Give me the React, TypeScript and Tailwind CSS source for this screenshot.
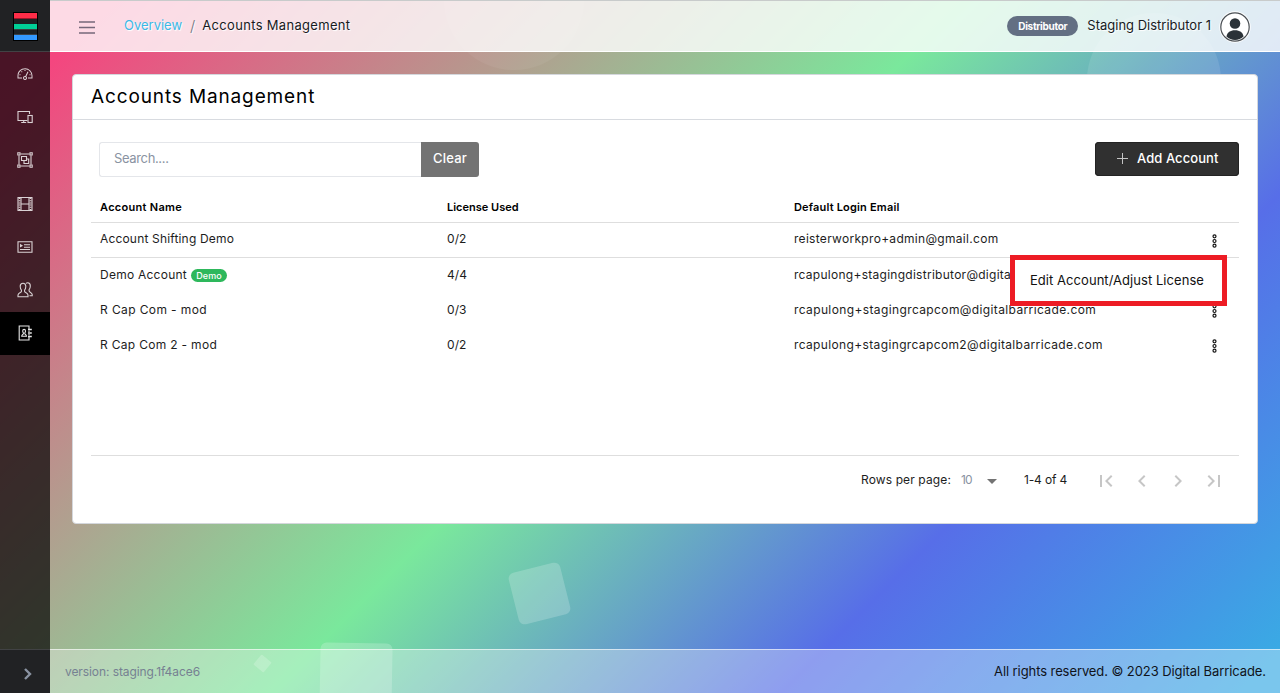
import type { ReactNode } from 'react';

function Icon({ children }: { children: ReactNode }) {
  return (
    <svg viewBox="0 0 16 16" className="h-4 w-4" fill="none" stroke="currentColor" strokeWidth="1.1">
      {children}
    </svg>
  );
}

const menu: { name: string; active?: boolean; icon: ReactNode }[] = [
  {
    name: 'dashboard',
    icon: (
      <svg viewBox="0 0 512 512" className="h-4 w-4" fill="currentColor">
        <path d="M425.706,142.294A240,240,0,0,0,16,312v88H160V368H48V312c0-114.691,93.309-208,208-208s208,93.309,208,208v56H352v32H496V312A238.432,238.432,0,0,0,425.706,142.294Z" />
        <path d="M80 264h32v32H80zM240 128h32v32h-32zM136 168h32v32h-32zM400 264h32v32h-32z" />
        <path d="M297.222,335.1l69.2-144.173-28.85-13.848L268.389,321.214A64.141,64.141,0,1,0,297.222,335.1ZM256,416a32,32,0,1,1,32-32A32.036,32.036,0,0,1,256,416Z" />
      </svg>
    ),
  },
  {
    name: 'devices',
    icon: (
      <Icon>
        <path d="M12.5 5V2.5H1v9h9.3M4.2 13.5h5M6.7 11.5v2" />
        <rect x="11" y="6.5" width="4.2" height="7" />
      </Icon>
    ),
  },
  {
    name: 'groups',
    icon: (
      <Icon>
        <path d="M2 3.5v9M14 3.5v9M3.5 2h9M3.5 14h9" />
        <path d="M.8.8h2.2v2.2H.8zM13 .8h2.2v2.2H13zM.8 13h2.2v2.2H.8zM13 13h2.2v2.2H13z" />
        <path d="M4.5 4.5h5v4h-5zM9.5 7h2.2v4.5H7V8.5" />
      </Icon>
    ),
  },
  {
    name: 'films',
    icon: (
      <Icon>
        <path d="M1 1.5h14v13H1zM4 1.5v13M12 1.5v13M4 8h8" />
        <path d="M2.5 2v12M13.5 2v12" strokeDasharray="1 1.2" strokeWidth="1.6" />
      </Icon>
    ),
  },
  {
    name: 'playlists',
    icon: (
      <Icon>
        <path d="M1 2.8h14v10.5H1z" />
        <path d="M7 5.8h6M7 8.2h6M3 10.5h10" />
        <path d="M3 4.8v3.8L6 6.7z" fill="currentColor" stroke="none" />
      </Icon>
    ),
  },
  {
    name: 'users',
    icon: (
      <Icon>
        <path d="M6 1.2C4.200 1.200 3.200 2.500 3.200 4.300c0 1.700.4 2.800 1.200 3.700v1.500C4.400 10.300 1 11 1 13v1.800h10V13c0-2-3.400-2.700-3.400-3.500V8c.8-.9 1.200-2 1.200-3.700C8.800 2.500 7.800 1.200 6 1.200z" />
        <path d="M9 1.500C9.500.9 10 .8 10.700.8c1.700 0 2.600 1.300 2.600 3.100 0 1.700-.4 2.800-1.200 3.700v1.500c0 .9 3.100 1.500 3.100 3.400v1.300h-2.700" />
      </Icon>
    ),
  },
  {
    name: 'accounts',
    active: true,
    icon: (
      <Icon>
        <path d="M12 4V1H2.200v14H12v-3M12 5.500v1.500M12 9v1.500" />
        <path d="M11 4.500h3.800M11 8h3.800M11 11.500h3.800" strokeWidth="1.500" />
        <path d="M7.100 4.400c-.9 0-1.400.7-1.400 1.600s.3 1.500.7 1.900v.8c0 .5-1.700.7-1.700 2.600h4.800c0-1.900-1.700-2.100-1.700-2.600v-.8c.4-.4.7-1 .7-1.900s-.5-1.600-1.400-1.600z" />
      </Icon>
    ),
  },
];

function Sidebar() {
  return (
    <aside className="flex h-full w-[50px] shrink-0 flex-col bg-black/70">
      <div className="flex h-[52px] shrink-0 items-center justify-center border-b border-[#414244] bg-[#212224]">
        <svg viewBox="0 0 25 29" className="mt-px h-[29px] w-[25px]">
          <rect width="25" height="29" fill="#000" />
          <rect x="1" y="1" width="23" height="27" fill="#1d2123" />
          <rect x="1" y="1" width="23" height="5" fill="#ff2d48" />
          <rect x="1" y="6" width="23" height="1" fill="#a0162a" />
          <rect x="1" y="12" width="23" height="5" fill="#00cf96" />
          <rect x="1" y="17" width="23" height="1" fill="#3a3f41" />
          <rect x="1" y="22" width="23" height="1" fill="#3a4148" />
          <rect x="1" y="23" width="23" height="5" fill="#3399ff" />
        </svg>
      </div>
      <nav className="flex grow flex-col pt-[0.8px]">
        {menu.map((m) => (
          <div
            key={m.name}
            className={
              m.active
                ? 'flex h-[43.2px] items-center justify-center bg-black pb-[1.2px] text-white/90'
                : 'flex h-[43.2px] items-center justify-center pb-[0.7px] text-white/80'
            }
          >
            {m.icon}
          </div>
        ))}
      </nav>
      <div className="flex h-11 shrink-0 items-center justify-center border-t border-[#414244] bg-[#212224] pt-1 pl-[5px]">
        <svg viewBox="0 0 8 12" className="h-3 w-2" fill="none" stroke="#8a93a2" strokeWidth="2.400">
          <path d="M1 1l5 5-5 5" />
        </svg>
      </div>
    </aside>
  );
}

function Topbar() {
  return (
    <header className="flex h-[52px] shrink-0 items-center border-t border-b border-t-[#c8cbcb] border-b-white bg-white/80 pr-[29px] pl-[29px] text-[13px] text-[#181b1e] [text-shadow:1px_1px_1px_#fff]">
      <svg viewBox="0 0 16 13" className="mt-[2px] h-[13px] w-4 shrink-0" stroke="#75687a" strokeWidth="1.300">
        <path d="M0 1h16M0 6.500h16M0 12h16" />
      </svg>
      <span className="ml-[29px] text-[#3cb9e6]">Overview</span>
      <span className="ml-2 text-[15px] font-light text-[#6c7580]">/</span>
      <span className="ml-[7px] tracking-[0.31px]">Accounts Management</span>
      <span className="mr-[9px] ml-auto flex h-5 w-[71px] items-center justify-center rounded-full bg-[#636f83] text-[10px] font-bold tracking-[-0.3px] text-white [text-shadow:none]">
        Distributor
      </span>
      <span>Staging Distributor 1</span>
      <svg viewBox="0 0 32 32" className="mt-px ml-2 h-8 w-8">
        <circle cx="16" cy="16" r="15.700" fill="#fff" />
        <circle cx="16" cy="16" r="14.200" fill="#fff" stroke="#4a4f54" strokeWidth="1.200" />
        <circle cx="16" cy="12.500" r="5.300" fill="#2b3238" />
        <path d="M7.500 25.500c.6-4 3.700-6.200 8.500-6.200s7.900 2.200 8.500 6.200c-2.300 2.300-5.200 3.500-8.500 3.500s-6.200-1.200-8.500-3.500z" fill="#2b3238" />
      </svg>
    </header>
  );
}

function Kebab() {
  return (
    <svg viewBox="0 0 5 14" className="mt-[3px] h-[14px] w-[5px]" fill="none" stroke="#111" strokeWidth="1.200">
      <circle cx="2.500" cy="2.300" r="1.500" />
      <circle cx="2.500" cy="7" r="1.500" />
      <circle cx="2.500" cy="11.700" r="1.500" />
    </svg>
  );
}

const rows = [
  {
    name: 'Account Shifting Demo',
    nameClass: 'tracking-[0.17px]',
    used: '0/2',
    email: 'reisterworkpro+admin@gmail.com',
    emailClass: 'tracking-[0.3px]',
    line: true,
  },
  {
    name: 'Demo Account',
    nameClass: 'tracking-[0.25px]',
    used: '4/4',
    email: 'rcapulong+stagingdistributor@digita',
    emailClass: 'tracking-[0.27px]',
    demo: true,
  },
  {
    name: 'R Cap Com - mod',
    nameClass: 'tracking-[0.39px]',
    used: '0/3',
    email: 'rcapulong+stagingrcapcom@digitalbarricade.com',
    emailClass: 'tracking-[0.38px]',
  },
  {
    name: 'R Cap Com 2 - mod',
    nameClass: 'tracking-[0.31px]',
    used: '0/2',
    email: 'rcapulong+stagingrcapcom2@digitalbarricade.com',
    emailClass: 'tracking-[0.36px]',
  },
];

function Table() {
  return (
    <div className="flex h-[264px] flex-col border-b border-[#dedede] text-[12px] text-[#1d1d1d]">
      <div className="flex h-[31px] items-center border-b border-[#dedede] pl-[9px] text-[11px] font-semibold text-black">
        <span className="w-[347px] tracking-[0.29px]">Account Name</span>
        <span className="w-[347px]">License Used</span>
        <span className="tracking-[0.18px]">Default Login Email</span>
      </div>
      {rows.map((r) => (
        <div
          key={r.name}
          className={
            r.line
              ? 'flex h-[35px] items-center border-b border-[#dedede] pb-[2px] pl-[9px]'
              : 'flex h-[35px] items-center pb-[2px] pl-[9px]'
          }
        >
          <span className="flex w-[347px] items-center gap-1">
            <span className={r.nameClass}>{r.name}</span>
            {r.demo && (
              <span className="mt-[2px] flex h-[13px] w-9 items-center justify-center rounded-full bg-[#2eb85c] text-[9px] font-medium tracking-[0.15px] text-white">
                Demo
              </span>
            )}
          </span>
          <span className="w-[347px] tracking-[0.08px]">{r.used}</span>
          <span className="w-[418px]">
            <span className={r.emailClass}>{r.email}</span>
          </span>
          <Kebab />
        </div>
      ))}
    </div>
  );
}

function Pagination() {
  return (
    <div className="flex h-12 items-center pr-[13px] text-[12px] text-[#1d1d1d]">
      <span className="ml-auto tracking-[0.12px]">Rows per page:</span>
      <span className="ml-[10px] w-[26px] tracking-[-0.8px] text-[#8a93a2]">10</span>
      <svg viewBox="0 0 10 5" className="mt-[3px] h-[5px] w-[10px]" fill="#737373">
        <path d="M0 0h10L5 5z" />
      </svg>
      <span className="ml-[27px] w-[70px] tracking-[-0.16px]">1-4 of 4</span>
      <div className="mt-[2px] flex gap-3 text-[#c6c6c6]">
        {[
          'M18.410 16.590L13.820 12l4.590-4.590L17 6l-6 6 6 6zM6 6h2v12H6z',
          'M15.410 7.410L14 6l-6 6 6 6 1.410-1.410L10.830 12z',
          'M10 6L8.590 7.410 13.170 12l-4.580 4.590L10 18l6-6z',
          'M5.590 7.410L10.180 12l-4.590 4.590L7 18l6-6-6-6zM16 6h2v12h-2z',
        ].map((d) => (
          <svg key={d} viewBox="0 0 24 24" className="h-6 w-6" fill="currentColor">
            <path d={d} />
          </svg>
        ))}
      </div>
    </div>
  );
}

export default function App() {
  return (
    <div className="relative flex h-[693px] w-[1280px] overflow-hidden bg-[linear-gradient(135deg,#f8437f_0px,#f4467f_80px,#7ae89c_682px,#576ee8_1042px,#3aaae4_1366px)] font-['Inter',sans-serif]">
      <div className="absolute top-[-70px] left-[444px] size-[140px] rounded-full bg-white/5" />
      <div className="absolute top-[13px] left-[1087px] size-[134px] rounded-full bg-white/10" />
      <div className="absolute top-[567px] left-[513px] size-[53px] rotate-[-14deg] rounded-md bg-white/20" />
      <div className="absolute top-[643px] left-[320px] size-[72px] rotate-1 rounded-md bg-white/20" />
      <div className="absolute top-[657px] left-[256px] size-[13px] rotate-[40deg] rounded-[1px] bg-white/20" />

      <div className="relative flex h-full w-full">
        <Sidebar />
        <div className="flex min-w-0 grow flex-col">
          <Topbar />
          <main className="grow px-[22px] pt-[22px]">
            <section className="h-[450px] w-[1186px] rounded border border-[#d4d7dc] bg-white px-[18px]">
              <h1 className="-mx-[18px] flex h-[45px] items-center border-b border-[#d8dbe0] pl-[18px] text-[19px] tracking-[0.87px] text-black">
                Accounts Management
              </h1>
              <div className="flex h-[72px] pt-[22px] pl-2">
                <div className="flex h-[35px] w-[322px] items-center rounded-l-[3px] border border-r-0 border-[#e4e6ea] pb-[2px] pl-[14px] text-[13px] tracking-[-0.36px] text-[#8a93a2]">
                  Search....
                </div>
                <button className="h-[35px] w-[58px] rounded-r-[3px] bg-[#737373] pb-[2px] text-[13px] font-medium tracking-[0.2px] text-white">
                  Clear
                </button>
                <button className="ml-auto flex h-[34px] w-36 items-center rounded bg-[#303030] pl-[22px] text-[13px] font-medium tracking-[0.07px] text-white shadow-[inset_0_0_0_1px_#232323]">
                  <svg viewBox="0 0 11 11" className="mr-[9px] mb-px h-[11px] w-[11px]" stroke="#c4c4c4" strokeWidth="1">
                    <path d="M5.500 0v11M0 5.500h11" />
                  </svg>
                  Add Account
                </button>
              </div>
              <Table />
              <Pagination />
            </section>
          </main>
          <footer className="flex h-11 shrink-0 items-center justify-between border-t border-white/60 bg-white/33 pr-[14px] pl-[15px] text-[12px]">
            <span className="tracking-[-0.08px] text-[#768192]">version: staging.1f4ace6</span>
            <span className="text-[13px] tracking-[-0.085px] text-[#10131a]">All rights reserved. © 2023 Digital Barricade.</span>
          </footer>
        </div>
      </div>

      <div className="absolute top-[255px] left-[1010px] flex h-[51px] w-[217px] items-center border-5 border-[#ed1c24] bg-white pl-[15px] text-[13px] tracking-[0.05px] text-[#111]">
        Edit Account/Adjust License
      </div>
    </div>
  );
}
